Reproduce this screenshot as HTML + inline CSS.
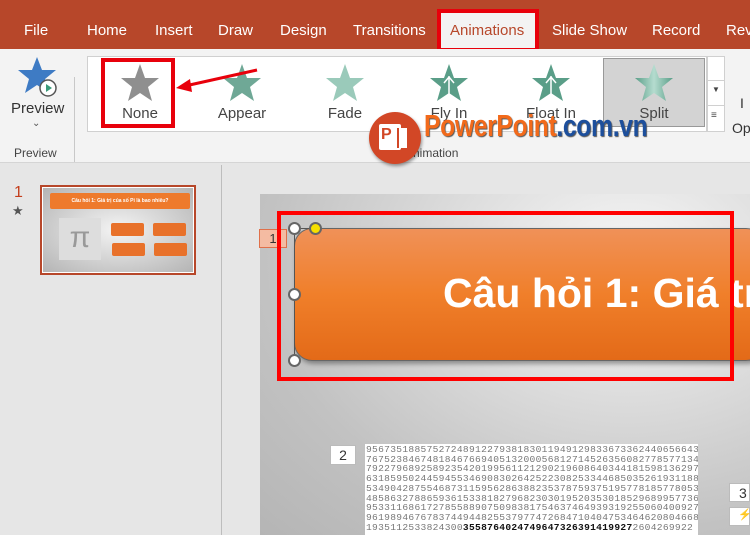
<!DOCTYPE html>
<html><head><meta charset="utf-8"><style>
*{margin:0;padding:0;box-sizing:border-box}
body{width:750px;height:535px;overflow:hidden;position:relative;font-family:"Liberation Sans",sans-serif;background:#e6e6e6}
.abs{position:absolute}
.tab{position:absolute;top:22px;color:#fff;font-size:15px;white-space:nowrap}
.gl{position:absolute;top:105px;font-size:15px;color:#444;text-align:center;width:80px}
.num{font-family:"Liberation Mono",monospace;font-size:9.6px;line-height:9.7px;color:#777;letter-spacing:0.3px;white-space:pre}
</style></head><body>
<div class="abs" style="left:0;top:0;width:750px;height:49px;background:#b7472a"></div>
<div class="abs" style="left:440px;top:10px;width:96px;height:39px;background:#f3f3f3"></div>
<div class="tab" style="left:24px">File</div>
<div class="tab" style="left:87px">Home</div>
<div class="tab" style="left:155px">Insert</div>
<div class="tab" style="left:218px">Draw</div>
<div class="tab" style="left:280px">Design</div>
<div class="tab" style="left:353px">Transitions</div>
<div class="tab" style="left:450px;color:#b7472a">Animations</div>
<div class="tab" style="left:552px">Slide Show</div>
<div class="tab" style="left:652px">Record</div>
<div class="tab" style="left:726px">Rev</div>
<div class="abs" style="left:437px;top:9px;width:102px;height:43px;border:4px solid #e8000b"></div>
<div class="abs" style="left:0;top:49px;width:750px;height:114px;background:#f3f3f3;border-bottom:1px solid #d5d5d5"></div>
<div class="abs" style="left:74px;top:77px;width:1px;height:85px;background:#c8c8c8"></div>
<svg class="abs" style="left:17px;top:55px" width="44" height="44" viewBox="0 0 44 44"><polygon points="20,2 25,15 39,15 28,24 32,38 20,30 8,38 12,24 1,15 15,15" fill="#3e7bc4"/><circle cx="31" cy="33" r="8" fill="#fff" stroke="#555" stroke-width="1.5"/><polygon points="29,29 29,37 35,33" fill="#3a9a7a"/></svg>
<div class="abs" style="left:11px;top:100px;font-size:15px;color:#333">Preview</div>
<div class="abs" style="left:32px;top:118px;font-size:10px;color:#555">⌄</div>
<div class="abs" style="left:14px;top:146px;font-size:12px;color:#444">Preview</div>
<div class="abs" style="left:87px;top:56px;width:620px;height:76px;background:#fff;border:1px solid #d0d0d0"></div>
<div class="abs" style="left:603px;top:58px;width:102px;height:69px;background:#d3d3d3;border:1px solid #999"></div>
<div class="abs" style="left:707px;top:56px;width:18px;height:76px;background:#fff;border:1px solid #d0d0d0"></div>
<div class="abs" style="left:707px;top:80px;width:18px;height:1px;background:#d0d0d0"></div>
<div class="abs" style="left:707px;top:105px;width:18px;height:1px;background:#d0d0d0"></div>
<div class="abs" style="left:712px;top:85px;font-size:8px;color:#444">▼</div>
<div class="abs" style="left:711px;top:110px;font-size:10px;color:#444">≡</div>
<div class="abs" style="left:740px;top:95px;font-size:14px;color:#333">I</div>
<div class="abs" style="left:732px;top:120px;font-size:14px;color:#333">Op</div>
<svg class="abs" style="left:0;top:0" width="750" height="110">
<defs><linearGradient id="g" x1="0" x2="1"><stop offset="0" stop-color="#5a9e88"/><stop offset=".5" stop-color="#b5dccf"/><stop offset="1" stop-color="#5a9e88"/></linearGradient></defs>
<polygon points="140,64 145,78 159,78 148,87 152,101 140,93 128,101 132,87 121,78 135,78" fill="#8f8f8f"/>
<polygon points="242,64 247,78 261,78 250,87 254,101 242,93 230,101 234,87 223,78 237,78" fill="#6fa896"/>
<polygon points="345,64 350,78 364,78 353,87 357,101 345,93 333,101 337,87 326,78 340,78" fill="#8fc4b2" opacity=".9"/>
<polygon points="449,64 454,78 468,78 457,87 461,101 449,93 437,101 441,87 430,78 444,78" fill="#5a9e88"/>
<polygon points="551,64 556,78 570,78 559,87 563,101 551,93 539,101 543,87 532,78 546,78" fill="#5a9e88"/>
<polygon points="654,64 659,78 673,78 662,87 666,101 654,93 642,101 646,87 635,78 649,78" fill="url(#g)"/>
<path d="M449,76 V105 M444,83 L449,77 L454,83 M551,76 V100 M546,83 L551,77 L556,83" stroke="#fff" stroke-width="1.5" fill="none"/>
<line x1="257" y1="70" x2="185" y2="86" stroke="#e8000b" stroke-width="3"/>
<polygon points="176,88 190,79 192,92" fill="#e8000b"/>
</svg>
<div class="gl" style="left:100px">None</div>
<div class="gl" style="left:202px">Appear</div>
<div class="gl" style="left:305px">Fade</div>
<div class="gl" style="left:409px">Fly In</div>
<div class="gl" style="left:511px">Float In</div>
<div class="gl" style="left:614px">Split</div>
<div class="abs" style="left:101px;top:58px;width:74px;height:70px;border:4px solid #e8000b"></div>
<div class="abs" style="left:405px;top:146px;font-size:12px;color:#444">Animation</div>
<div class="abs" style="left:369px;top:112px;width:52px;height:52px;border-radius:50%;background:#d24726;box-shadow:1px 2px 3px rgba(0,0,0,.4)"></div>
<div class="abs" style="left:379px;top:124px;width:22px;height:26px;background:#fff;border-radius:2px"></div>
<div class="abs" style="left:381px;top:126px;font-size:16px;font-weight:bold;color:#d24726">P</div>
<div class="abs" style="left:397px;top:128px;width:10px;height:20px;background:#fff;border-left:2px solid #d24726"></div>
<div class="abs" style="left:424px;top:108px;font-size:31px;font-weight:bold;letter-spacing:-0.5px;transform:scaleX(.8);transform-origin:left;color:#f26a1b;text-shadow:1px 1px 1px #555;white-space:nowrap">PowerPoint<span style="color:#1d4f9c">.com.vn</span></div>
<div class="abs" style="left:221px;top:165px;width:1px;height:370px;background:#bdbdbd"></div>
<div class="abs" style="left:14px;top:184px;font-size:16px;color:#c43e1c">1</div>
<div class="abs" style="left:12px;top:203px;font-size:13px;color:#555">★</div>
<div class="abs" style="left:40px;top:185px;width:156px;height:90px;border:2px solid #b7472a;padding:1px;background:#fff">
<div style="width:100%;height:100%;background:radial-gradient(#f4f4f4,#b4b4b4);position:relative">
<div class="abs" style="left:7px;top:5px;width:140px;height:16px;background:#ee7a2c;border-radius:2px;color:#fff;font-size:5px;font-weight:bold;text-align:center;line-height:16px">Câu hỏi 1: Giá trị của số Pi là bao nhiêu?</div>
<div class="abs" style="left:16px;top:30px;width:42px;height:42px;background:#ddd;color:#999;font-size:30px;text-align:center;line-height:40px">π</div>
<div class="abs" style="left:68px;top:35px;width:33px;height:13px;background:#e8712a;border-radius:2px"></div>
<div class="abs" style="left:110px;top:35px;width:33px;height:13px;background:#e8712a;border-radius:2px"></div>
<div class="abs" style="left:69px;top:55px;width:33px;height:13px;background:#e8712a;border-radius:2px"></div>
<div class="abs" style="left:111px;top:55px;width:33px;height:13px;background:#e8712a;border-radius:2px"></div>
</div></div>
<div class="abs" style="left:260px;top:194px;width:490px;height:341px;background:radial-gradient(ellipse at 75% 20%,#f7f7f7,#c2c2c2 70%,#b5b5b5)"></div>
<div class="abs" style="left:294px;top:228px;width:470px;height:133px;border-radius:18px;background:linear-gradient(#f09158,#f07f2a 50%,#e36a18);border:1px solid #666;box-shadow:2px 3px 5px rgba(0,0,0,.35)"></div>
<div class="abs" style="left:443px;top:270px;font-size:41px;font-weight:bold;color:#fff;white-space:nowrap;font-family:'Liberation Sans','DejaVu Sans',sans-serif">Câu hỏi 1: Giá tr</div>
<div class="abs" style="left:259px;top:229px;width:28px;height:19px;background:#f4bba2;border:1px solid #e0704a;font-size:13px;color:#333;text-align:center;line-height:18px">1</div>
<div class="abs" style="left:294px;top:229px;width:1px;height:132px;background:#555"></div>
<div class="abs" style="left:294px;top:228px;width:22px;height:1px;background:#555"></div>
<div class="abs" style="left:288px;top:222px;width:13px;height:13px;border-radius:50%;background:#fff;border:2px solid #666"></div>
<div class="abs" style="left:309px;top:222px;width:13px;height:13px;border-radius:50%;background:#f5e000;border:2px solid #666"></div>
<div class="abs" style="left:288px;top:288px;width:13px;height:13px;border-radius:50%;background:#fff;border:2px solid #666"></div>
<div class="abs" style="left:288px;top:354px;width:13px;height:13px;border-radius:50%;background:#fff;border:2px solid #666"></div>
<div class="abs" style="left:277px;top:211px;width:457px;height:170px;border:4px solid #ff0000"></div>
<div class="abs" style="left:330px;top:445px;width:26px;height:20px;background:#fff;border:1px solid #bbb;font-size:14px;text-align:center;line-height:18px;color:#333">2</div>
<div class="abs num" style="left:365px;top:444px;width:333px;height:91px;background:#fff;overflow:hidden;padding:1px 0 0 1px">9567351885752724891227938183011949129833673362440656643
7675238467481846766940513200056812714526356082778577134
7922796892589235420199561121290219608640344181598136297
6318595024459455346908302642522308253344685035261931188
5349042875546873115956286388235378759375195778185778053
4858632788659361533818279682303019520353018529689957736
9533116861727855889075098381754637464939319255060400927
9619894676783744944825537977472684710404753464620804668
1935112533824300<b style="color:#111">3558764024749647326391419927</b>2604269922</div>
<div class="abs" style="left:729px;top:483px;width:21px;height:19px;background:#fff;border:1px solid #bbb;font-size:14px;color:#333;padding-left:9px;line-height:18px">3</div>
<div class="abs" style="left:729px;top:507px;width:21px;height:19px;background:#fff;border:1px solid #bbb;font-size:11px;color:#d9a800;padding-left:8px">⚡</div>
</body></html>
